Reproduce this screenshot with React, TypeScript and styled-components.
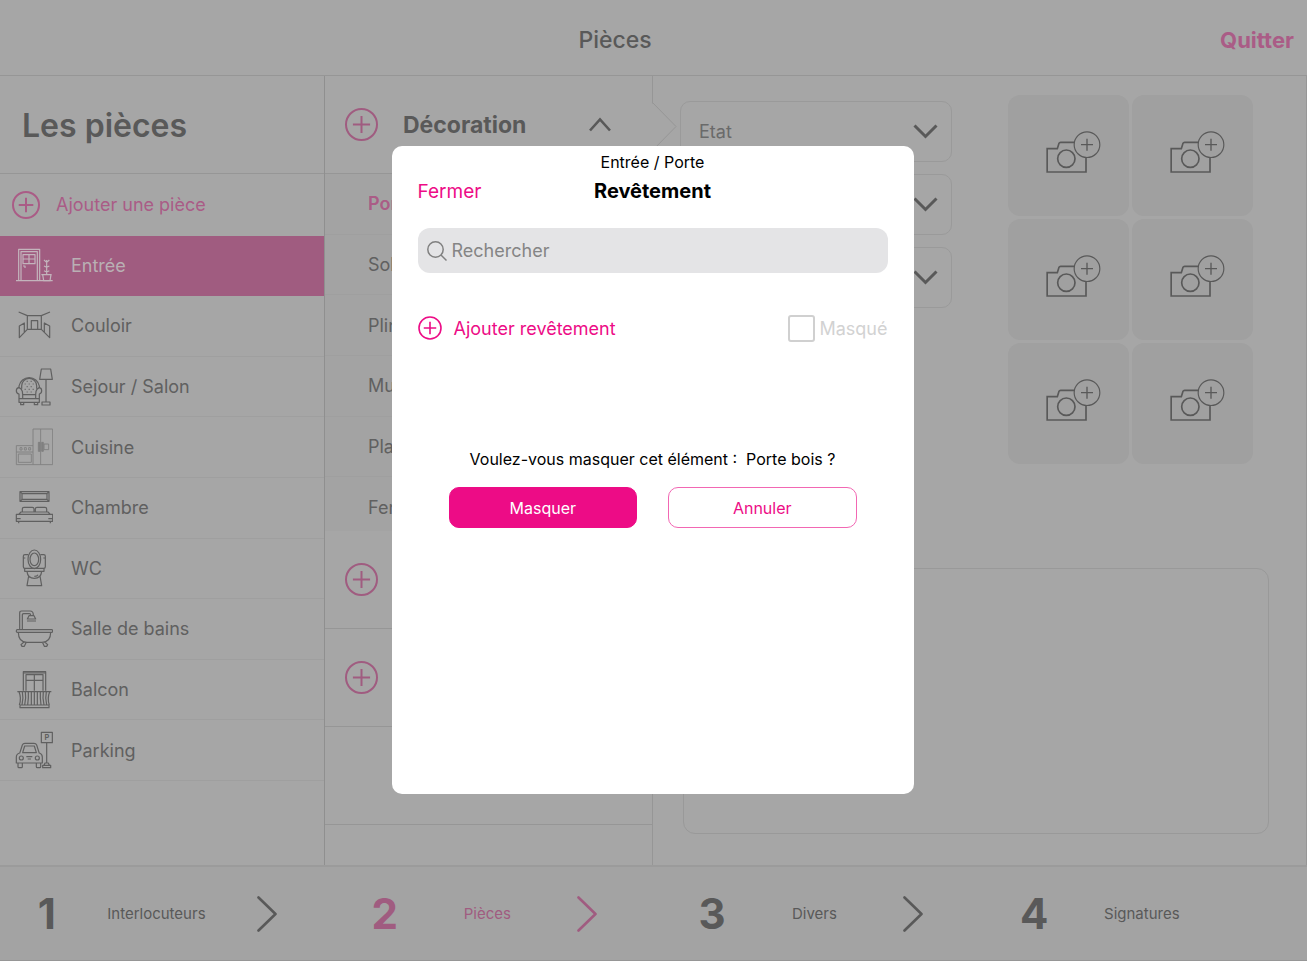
import React from "react";
import styled, { createGlobalStyle } from "styled-components";

const color = {
  base: "#a6a6a6",
  shade: "#a3a3a3",
  tile: "#a0a0a0",
  line: "#969696",
  faint: "#9f9f9f",
  ink: "#595959",
  softInk: "#606060",
  rose: "#a05c80",
  roseSoft: "#aa5c86",
  pink: "#ed0c86",
};

const GlobalStyle = createGlobalStyle`
  * { box-sizing: border-box; }
  body {
    margin: 0;
    background: ${color.base};
    color: ${color.ink};
    font-family: Inter, "Liberation Sans", sans-serif;
    font-size: 18px;
  }
  button, input, select, textarea { font: inherit; color: inherit; }
  button {
    background: none;
    border: 0;
    padding: 0;
    cursor: pointer;
  }
  h1, h2, h3, p, ul { margin: 0; padding: 0; }
  ul { list-style: none; }
  svg { display: block; flex: none; }
`;

const Page = styled.div`
  min-height: 100vh;
  display: flex;
  flex-direction: column;
`;

const Header = styled.header`
  height: 76px;
  display: flex;
  align-items: center;
  padding: 4px 13px 0 10px;
  border-bottom: 1px solid ${color.line};
`;

const PageTitle = styled.h1`
  flex: 1;
  text-align: center;
  font-size: 23px;
  font-weight: 500;
`;

const QuitButton = styled.button`
  color: ${color.roseSoft};
  font-size: 22px;
  font-weight: 700;
`;

const Columns = styled.div`
  flex: 1;
  display: grid;
  grid-template-columns: 325px 328px 1fr;
`;

const Sidebar = styled.nav`
  border-right: 1px solid #8f8f8f;
`;

const SidebarTitle = styled.h2`
  height: 98px;
  display: flex;
  align-items: center;
  padding: 2px 0 0 22px;
  border-bottom: 1px solid ${color.line};
  font-size: 32px;
  font-weight: 600;
`;

const RoomList = styled.ul`
  height: 607px;
  display: grid;
  grid-auto-rows: 1fr;
  padding-top: 1px;
`;

const RoomItem = styled.li`
  display: flex;
`;

const RoomButton = styled.button<{ $active?: boolean }>`
  flex: 1;
  display: flex;
  align-items: center;
  gap: 18px;
  padding-left: 15px;
  text-align: left;
  border-bottom: 1px solid ${(p) => (p.$active ? color.rose : color.faint)};
  background: ${(p) => (p.$active ? color.rose : "transparent")};
  color: ${(p) => (p.$active ? "#b9b0b4" : color.softInk)};
`;

const AddRoomButton = styled(RoomButton)`
  gap: 16px;
  padding-left: 12px;
  border-bottom-color: transparent;
  color: ${color.roseSoft};
`;

const Elements = styled.section`
  position: relative;
  border-right: 1px solid ${color.line};
`;

const GroupHeader = styled.div`
  height: 98px;
  display: flex;
  align-items: center;
  gap: 25px;
  padding: 0 41px 0 20px;
  border-bottom: 1px solid ${color.line};
  color: ${color.rose};
`;

const GroupTitle = styled.h3`
  flex: 1;
  color: ${color.ink};
  font-size: 23px;
  font-weight: 700;
`;

const ElementClip = styled.div`
  height: 357px;
  overflow: hidden;
  background: ${color.shade};
`;

const ElementList = styled.ul`
  height: 364px;
  display: grid;
  grid-auto-rows: 1fr;
`;

const ElementItem = styled.li<{ $active?: boolean }>`
  display: flex;
  align-items: center;
  padding-left: 43px;
  border-bottom: 1px solid ${color.faint};
  font-weight: ${(p) => (p.$active ? 600 : 400)};
  color: ${(p) => (p.$active ? color.roseSoft : color.softInk)};
`;

const Pointer = styled.svg`
  position: absolute;
  top: 25px;
  right: -25px;
`;

const Detail = styled.main`
  display: flex;
  flex-direction: column;
  gap: 104px;
  padding: 19px 37px 31px 27px;
  border-right: 1px solid ${color.line};
`;

const DetailTop = styled.div`
  display: flex;
  justify-content: space-between;
  padding-right: 16px;
`;

const SelectStack = styled.div`
  width: 272px;
  display: flex;
  flex-direction: column;
  gap: 12px;
  padding-top: 6px;
`;

const SelectBox = styled.div`
  position: relative;
  svg {
    position: absolute;
    right: 14px;
    top: 23px;
    pointer-events: none;
  }
`;

const Select = styled.select`
  appearance: none;
  width: 100%;
  height: 61px;
  padding: 0 18px;
  border: 1px solid #9a9a9a;
  border-radius: 10px;
  background: transparent;
  color: #6a6a6a;
  opacity: 1;
`;

const PhotoGrid = styled.div`
  display: grid;
  grid-template-columns: repeat(2, 121px);
  grid-auto-rows: 121px;
  gap: 3px;
`;

const PhotoButton = styled.button`
  display: flex;
  align-items: center;
  justify-content: center;
  border-radius: 12px;
  background: ${color.tile};
`;

const Comment = styled.textarea`
  flex: 1;
  min-height: 200px;
  margin-left: 3px;
  resize: none;
  border: 1px solid #999999;
  border-radius: 12px;
  background: transparent;
`;

const Steps = styled.footer`
  height: 96px;
  display: grid;
  grid-template-columns: repeat(4, 1fr);
  border-top: 2px solid #9b9b9b;
  border-bottom: 1px solid ${color.line};
  background: ${color.shade};
`;

const Step = styled.button<{ $active?: boolean }>`
  display: flex;
  align-items: center;
  justify-content: space-around;
  padding: 0 24px 0 12px;
  color: ${(p) => (p.$active ? color.rose : color.ink)};
`;

const StepNumber = styled.span`
  font-size: 42px;
  font-weight: 700;
`;

const StepLabel = styled.span`
  font-size: 15px;
`;

const StepGap = styled.span`
  width: 20px;
`;

const Backdrop = styled.div`
  position: fixed;
  inset: 0;
  display: flex;
  align-items: center;
  justify-content: center;
  padding: 0 2px 21px 0;
`;

const Dialog = styled.div`
  width: 40%;
  min-width: 480px;
  height: 648px;
  padding: 5px 26px;
  border-radius: 10px;
  background: #ffffff;
  color: #000000;
`;

const Breadcrumb = styled.p`
  text-align: center;
  font-size: 16px;
  line-height: 22px;
`;

const DialogBar = styled.div`
  height: 36px;
  display: grid;
  grid-template-columns: 1fr auto 1fr;
  align-items: center;
  justify-items: start;
`;

const CloseButton = styled.button`
  color: ${color.pink};
  font-size: 19px;
`;

const DialogTitle = styled.h2`
  font-size: 20px;
  font-weight: 700;
`;

const SearchBox = styled.label`
  height: 45px;
  display: flex;
  align-items: center;
  gap: 5px;
  margin-top: 19px;
  padding: 0 9px;
  border-radius: 12px;
  background: #e4e4e6;
  color: #808080;
`;

const SearchInput = styled.input`
  flex: 1;
  min-width: 0;
  border: 0;
  padding: 0;
  outline: 0;
  background: transparent;
  &::placeholder { color: #858585; opacity: 1; }
`;

const AddRow = styled.div`
  height: 28px;
  display: flex;
  align-items: center;
  justify-content: space-between;
  margin-top: 41px;
`;

const AddButton = styled.button`
  display: flex;
  align-items: center;
  gap: 12px;
  color: ${color.pink};
`;

const MaskLabel = styled.label`
  display: flex;
  align-items: center;
  gap: 4px;
  color: #d2d2d2;
`;

const MaskCheck = styled.input`
  appearance: none;
  width: 27px;
  height: 27px;
  margin: 0;
  border: 2px solid #d0d0d0;
  border-radius: 3px;
`;

const Question = styled.p`
  margin-top: 106px;
  text-align: center;
  white-space: pre;
  font-size: 16px;
  line-height: 22px;
`;

const Actions = styled.div`
  display: flex;
  gap: 31px;
  margin-top: 17px;
  padding: 0 31px;
`;

const ActionButton = styled.button<{ $primary?: boolean }>`
  flex: 1;
  height: 41px;
  border: 1px solid ${(p) => (p.$primary ? color.pink : "#f267b3")};
  border-radius: 10px;
  background: ${(p) => (p.$primary ? color.pink : "#ffffff")};
  color: ${(p) => (p.$primary ? "#ffffff" : color.pink)};
  font-size: 16px;
`;

function PlusCircle({ size, stroke = 2 }: { size: number; stroke?: number }) {
  const c = size / 2;
  const arm = size * 0.26;
  return (
    <svg width={size} height={size} fill="none" stroke="currentColor" strokeWidth={stroke} aria-hidden="true">
      <circle cx={c} cy={c} r={c - 1} />
      <path d={`M${c - arm} ${c}H${c + arm}M${c} ${c - arm}V${c + arm}`} />
    </svg>
  );
}

function SelectChevron() {
  return (
    <svg width="25" height="16" fill="none" stroke={color.ink} strokeWidth="3" aria-hidden="true">
      <path d="M1.5 1.5L12.5 12.5L23.5 1.5" />
    </svg>
  );
}

function StepChevron() {
  return (
    <svg width="20" height="36" fill="none" stroke="currentColor" strokeWidth="2.6" strokeLinecap="round" strokeLinejoin="round" aria-hidden="true">
      <path d="M1.5 1.5L18.5 18L1.5 34.5" />
    </svg>
  );
}

function CameraIcon() {
  return (
    <svg width="64" height="52" viewBox="141 150 192 156" fill="none" stroke={color.ink} aria-hidden="true">
      <g strokeWidth="5">
        <path d="M288 234V276H171.500V206H202L207 190Q208 187 212 187H253" />
        <circle cx="229" cy="236" r="26" />
      </g>
      <circle cx="291" cy="194" r="38.500" strokeWidth="3.500" />
      <path d="M273 194H309M291 176V212" strokeWidth="4" />
    </svg>
  );
}

function RoomIcon({ children, stroke = "currentColor", weight = 3.6 }: { children: React.ReactNode; stroke?: string; weight?: number }) {
  return (
    <svg width="38" height="38" viewBox="0 0 114 114" fill="none" stroke={stroke} strokeWidth={weight} strokeLinejoin="round" aria-hidden="true">
      {children}
    </svg>
  );
}

const rooms: { name: string; icon: React.ReactNode; active?: boolean }[] = [
  {
    name: "Entrée",
    active: true,
    icon: (
      <RoomIcon stroke="#c3b4bc">
        <path d="M3 104H113M11 104V10H74V104M18 104V17H67V104" />
        <path d="M24 26H60V53H24ZM42 26V53M24 39H60M24 60H30V66" />
        <path d="M79 86H110M83 86L86 104H105L108 86M95 42V86M87 42L95 49L103 42M87 60L95 64L103 60M87 74L95 78L103 74" />
      </RoomIcon>
    ),
  },
  {
    name: "Couloir",
    icon: (
      <RoomIcon>
        <path d="M11 15L37 26H79L105 15M37 26V67H79V26M49 67V41H68V67M37 67L13 92V57L28 48V75M79 67L104 92V57L88 48V75" />
      </RoomIcon>
    ),
  },
  {
    name: "Sejour / Salon",
    icon: (
      <RoomIcon>
        <path d="M79 3H107L112 34H74ZM93 34V102M81 102H105V111H81Z" />
        <path d="M12 60V54A31 31 0 0 1 73 54V60M20 62V54A22 22 0 0 1 65 54V62" />
        <path d="M12 59Q4 60 4 68Q4 76 12 78V103H73V78Q80 76 80 68Q80 60 73 59Q65 62 63 70L62 80H23L22 70Q20 62 12 59ZM12 92H73M23 80V92M62 80V92M17 103V110H26V103M58 103V110H68V103" />
        <path d="M35 40h3M47 40h3M29 48h3M41 48h3M53 48h3M35 56h3M47 56h3M29 64h3M41 64h3M53 64h3M35 72h3M47 72h3" />
      </RoomIcon>
    ),
  },
  {
    name: "Cuisine",
    icon: (
      <RoomIcon stroke="#808080" weight={2.8}>
        <path d="M54 3H113V110H54ZM77 3V110M4 53H54M4 53V110H54M4 72H54M10 78H49V103H10ZM87 48H101V65H87ZM15 59h6v7h-6ZM28 59h6v7h-6ZM41 59h6v7h-6Z" />
        <path d="M70 43H75V70H70ZM80 43H85V70H80Z" fill="#808080" />
      </RoomIcon>
    ),
  },
  {
    name: "Chambre",
    icon: (
      <RoomIcon>
        <path d="M15 8H102V37H15ZM21 14H96V31H21ZM15 8L21 14M102 8L96 14M15 37L21 31M102 37L96 31" />
        <path d="M22 69V59Q22 55 27 55H52Q57 55 57 60V69M61 69V60Q61 55 66 55H90Q95 55 95 60V69M11 76L18 69H99L106 76M4 76H113V97H4ZM4 89H17M100 89H113M11 97V103M106 97V103" />
      </RoomIcon>
    ),
  },
  {
    name: "WC",
    icon: (
      <RoomIcon>
        <ellipse cx="58" cy="31" rx="19" ry="28" />
        <ellipse cx="58" cy="31" rx="13" ry="19" />
        <path d="M40 17H30Q25 17 25 22V53Q25 58 30 58H86Q91 58 91 53V22Q91 17 86 17H76M25 27H31M85 27H91M29 59V67H87V59M36 67Q38 88 58 88Q78 88 80 67M41 81L36 110H80L75 81M58 82Q67 82 69 77" />
      </RoomIcon>
    ),
  },
  {
    name: "Salle de bains",
    icon: (
      <RoomIcon>
        <path d="M14 59V9Q14 3 20 3H45Q55 3 55 15M22 59V15Q22 11 26 11H43Q47 11 47 16M42 17H57L62 27H37ZM36 33H63" />
        <path d="M7 59H110Q113 59 113 63Q113 67 110 67H7Q4 67 4 63Q4 59 7 59ZM10 67Q10 97 36 97H81Q107 97 107 67M27 96L18 104L21 109H28L33 98M89 96L98 104L95 109H88L83 98" />
      </RoomIcon>
    ),
  },
  {
    name: "Balcon",
    icon: (
      <RoomIcon>
        <path d="M25 59V2H92V59M33 59V11H84V59M58 11V59M33 28H84M25 6H92" />
        <path d="M7 62H109M12 62Q20 82 13 102M22 62Q26 82 21 102M31 62Q34 82 29 102M40 62Q41 82 38 102M49 62V102M58 62V102M67 62V102M76 62Q75 82 78 102M85 62Q82 82 87 102M94 62Q90 82 95 102M104 62Q96 82 103 102M15 102H102V110H15Z" />
      </RoomIcon>
    ),
  },
  {
    name: "Parking",
    icon: (
      <RoomIcon>
        <path d="M79 4H112V35H79ZM95 35V96M87 103L90 96H100L103 103M83 103H107V110H83Z" />
        <text x="95.500" y="27" textAnchor="middle" fontSize="22" fontWeight="700" fill="currentColor" stroke="none">P</text>
        <path d="M14 67L22 42Q24 37 30 37H57Q63 37 65 42L73 67M23 65L29 45H58L64 65ZM14 66Q4 69 4 78V96H82V78Q82 69 73 66M9 96V107Q9 110 12 110H19Q22 110 22 107V96M64 96V107Q64 110 67 110H74Q77 110 77 107V96M34 77H52M38 84H48" />
        <circle cx="19" cy="81" r="6" />
        <circle cx="67" cy="81" r="6" />
      </RoomIcon>
    ),
  },
];

const elements = ["Porte", "Sol", "Plinthe", "Murs", "Plafond", "Fenêtre"];
const steps = ["Interlocuteurs", "Pièces", "Divers", "Signatures"];

export default function App() {
  return (
    <>
      <GlobalStyle />
      <Page>
        <Header>
          <PageTitle>Pièces</PageTitle>
          <QuitButton>Quitter</QuitButton>
        </Header>

        <Columns>
          <Sidebar>
            <SidebarTitle>Les pièces</SidebarTitle>
            <RoomList>
              <RoomItem>
                <AddRoomButton>
                  <PlusCircle size={28} />
                  Ajouter une pièce
                </AddRoomButton>
              </RoomItem>
              {rooms.map((room) => (
                <RoomItem key={room.name}>
                  <RoomButton $active={room.active}>
                    {room.icon}
                    {room.name}
                  </RoomButton>
                </RoomItem>
              ))}
            </RoomList>
          </Sidebar>

          <Elements>
            <GroupHeader>
              <PlusCircle size={33} />
              <GroupTitle>Décoration</GroupTitle>
              <svg width="22" height="15" fill="none" stroke={color.ink} strokeWidth="2.6" aria-hidden="true">
                <path d="M1 13.500L11 2.500L21 13.500" />
              </svg>
            </GroupHeader>
            <ElementClip>
              <ElementList>
                {elements.map((name, i) => (
                  <ElementItem key={name} $active={i === 0}>{name}</ElementItem>
                ))}
              </ElementList>
            </ElementClip>
            <GroupHeader><PlusCircle size={33} /></GroupHeader>
            <GroupHeader><PlusCircle size={33} /></GroupHeader>
            <GroupHeader />
            <Pointer width="26" height="51" fill="none" aria-hidden="true">
              <path d="M0 1L25 25.500L0 50Z" fill={color.base} />
              <path d="M1 1L25 25.500L1 50" stroke={color.line} />
            </Pointer>
          </Elements>

          <Detail>
            <DetailTop>
              <SelectStack>
                {["Etat", "", ""].map((label, i) => (
                  <SelectBox key={i}>
                    <Select aria-label={label || "Option"}>
                      <option>{label}</option>
                    </Select>
                    <SelectChevron />
                  </SelectBox>
                ))}
              </SelectStack>
              <PhotoGrid>
                {[1, 2, 3, 4, 5, 6].map((n) => (
                  <PhotoButton key={n} aria-label="Photo">
                    <CameraIcon />
                  </PhotoButton>
                ))}
              </PhotoGrid>
            </DetailTop>
            <Comment aria-label="Commentaire" />
          </Detail>
        </Columns>

        <Steps>
          {steps.map((label, i) => (
            <Step key={label} $active={i === 1}>
              <StepNumber>{i + 1}</StepNumber>
              <StepLabel>{label}</StepLabel>
              {i < steps.length - 1 ? <StepChevron /> : <StepGap />}
            </Step>
          ))}
        </Steps>
      </Page>

      <Backdrop>
        <Dialog role="dialog" aria-modal="true" aria-labelledby="dialog-title">
          <Breadcrumb>Entrée / Porte</Breadcrumb>
          <DialogBar>
            <CloseButton>Fermer</CloseButton>
            <DialogTitle id="dialog-title">Revêtement</DialogTitle>
          </DialogBar>
          <SearchBox>
            <svg width="20" height="20" fill="none" stroke="currentColor" strokeWidth="1.500" aria-hidden="true">
              <circle cx="8.500" cy="8.500" r="7.700" />
              <path d="M14 14L19.500 19.500" />
            </svg>
            <SearchInput type="text" placeholder="Rechercher" aria-label="Rechercher" />
          </SearchBox>
          <AddRow>
            <AddButton>
              <PlusCircle size={24} stroke={1.6} />
              Ajouter revêtement
            </AddButton>
            <MaskLabel>
              <MaskCheck type="checkbox" />
              Masqué
            </MaskLabel>
          </AddRow>
          <Question>{"Voulez-vous masquer cet élément :  Porte bois ?"}</Question>
          <Actions>
            <ActionButton $primary>Masquer</ActionButton>
            <ActionButton>Annuler</ActionButton>
          </Actions>
        </Dialog>
      </Backdrop>
    </>
  );
}
